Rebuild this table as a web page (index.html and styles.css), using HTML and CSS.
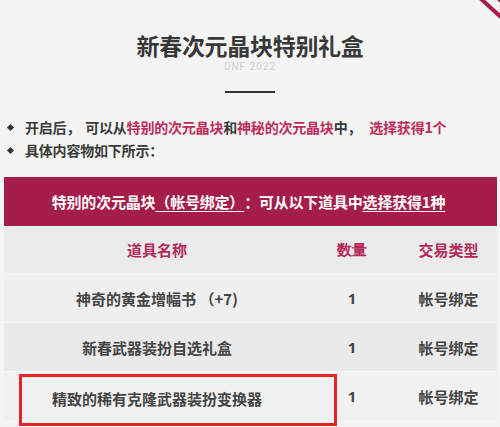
FILE: index.html
```html
<!DOCTYPE html>
<html lang="zh">
<head>
<meta charset="utf-8">
<link rel="stylesheet" href="styles.css">
</head>
<body>
<div class="page">
  <svg class="corner" width="40" height="30" viewBox="0 0 40 30">
    <line x1="20" y1="-2" x2="44" y2="20" stroke="#a81d4c" stroke-width="4"/>
    <line x1="32" y1="-8" x2="46" y2="6" stroke="#a81d4c" stroke-width="4"/>
  </svg>
  <header class="head">
    <h1 class="title">新春次元晶块特别礼盒</h1>
    <div class="sub">DNF 2022</div>
    <div class="rule"></div>
  </header>
  <ul class="bullets">
    <li>开启后，<span class="gap"></span>可以从<span class="hl">特别的次元晶块</span>和<span class="hl">神秘的次元晶块</span>中，<span class="gap wide"></span><span class="hl">选择获得1个</span></li>
    <li>具体内容物如下所示：</li>
  </ul>
  <section class="table">
    <div class="bar">特别的次元晶块<span class="u"> （帐号绑定）</span>：可从以下道具中<span class="u">选择获得1种</span></div>
    <div class="row hdr">
      <div class="c name">道具名称</div>
      <div class="c qty">数量</div>
      <div class="c type">交易类型</div>
    </div>
    <div class="row r1">
      <div class="c name">神奇的黄金增幅书 （+7)</div>
      <div class="c qty">1</div>
      <div class="c type">帐号绑定</div>
    </div>
    <div class="row r2">
      <div class="c name">新春武器装扮自选礼盒</div>
      <div class="c qty">1</div>
      <div class="c type">帐号绑定</div>
    </div>
    <div class="row r3">
      <div class="c name">精致的稀有克隆武器装扮变换器<span class="mark"></span></div>
      <div class="c qty">1</div>
      <div class="c type">帐号绑定</div>
    </div>
  </section>
</div>
</body>
</html>
```
FILE: styles.css
```css
html, body {
  margin: 0;
  padding: 0;
  background: #f4f4f4;
}
.page {
  position: relative;
  width: 500px;
  height: 427px;
  overflow: hidden;
  font-family: "Noto Sans CJK SC", "Noto Sans", sans-serif;
  display: flex;
  flex-direction: column;
}
.corner {
  position: absolute;
  top: 0;
  right: 0;
}
.head {
  display: flex;
  flex-direction: column;
  align-items: center;
  padding-top: 30px;
}
.title {
  margin: 0;
  font-size: 23px;
  line-height: 30px;
  font-weight: 700;
  color: #383838;
  letter-spacing: -0.3px;
}
.sub {
  font-family: Roboto, "Liberation Sans", sans-serif;
  font-size: 10px;
  line-height: 14px;
  color: #cfcfcf;
  letter-spacing: 1px;
}
.rule {
  margin-top: 17px;
  width: 50px;
  height: 2px;
  background: #333;
}
.bullets {
  list-style: none;
  margin: 23px 0 0 0;
  padding: 0 0 0 25px;
  font-size: 14px;
  line-height: 23px;
  font-weight: 700;
  color: #3a3a3a;
  letter-spacing: -0.2px;
}
.bullets li {
  position: relative;
}
.bullets li::before {
  content: "";
  position: absolute;
  left: -17px;
  top: 9px;
  width: 5px;
  height: 5px;
  background: #333;
  transform: rotate(45deg);
}
.gap {
  display: inline-block;
  width: 5px;
}
.gap.wide {
  width: 8px;
}
.hl {
  color: #bd2c5c;
}
.table {
  margin: 15px 3px 0 4px;
  display: flex;
  flex-direction: column;
}
.bar {
  height: 49px;
  background: #a51d4b;
  color: #fff;
  font-size: 15px;
  font-weight: 700;
  display: flex;
  align-items: center;
  justify-content: center;
  padding-right: 4px;
  letter-spacing: -0.2px;
}
.u {
  text-decoration: underline;
  text-underline-offset: 3px;
  text-decoration-thickness: 1px;
}
.row {
  display: grid;
  grid-template-columns: 306px 84px 1fr;
  height: 49px;
  align-items: center;
  font-size: 15px;
  font-weight: 700;
  color: #444;
  border-bottom: 1px solid #f6f6f6;
  box-sizing: border-box;
}
.row.hdr {
  height: 48px;
  color: #b5295a;
  background: #ebebeb;
}
.r1 { background: #efefef; }
.r2 { background: #eaeaea; }
.r3 { background: #f1f1f1; }
.c {
  text-align: center;
}
.qty {
  font-family: "Noto Sans", sans-serif;
}
.type {
  padding-left: 6px;
}
.name {
  position: relative;
}
.r3 .name {
  padding-top: 4px;
}
.mark {
  position: absolute;
  left: 15px;
  top: -10px;
  width: 312px;
  height: 46px;
  border: 3px solid #e42427;
}
```
